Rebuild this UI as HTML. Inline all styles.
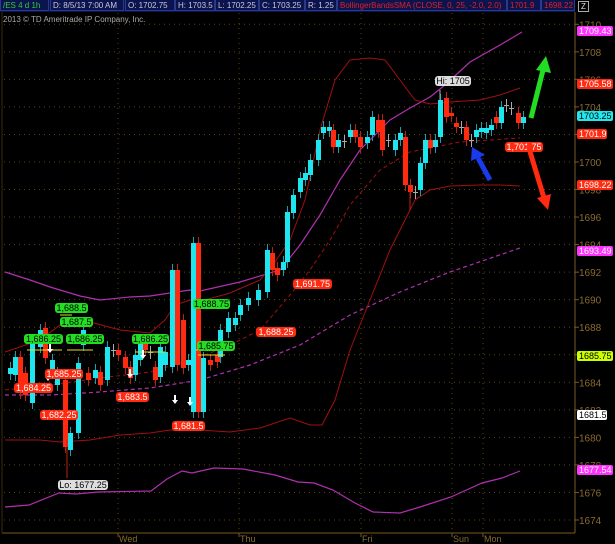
<!DOCTYPE html>
<html><head><meta charset="utf-8"><style>
html,body{margin:0;padding:0;background:#000;width:615px;height:544px;overflow:hidden;font-family:"Liberation Sans",sans-serif}
#hdr{position:absolute;left:0;top:0;height:12px;width:575px;background:#0c1450;}
.c{position:absolute;top:0;height:11px;border:1px solid #2a3a8a;border-top:none;font-size:8px;line-height:11px;color:#c8c8d8;padding-left:2px;box-sizing:border-box;white-space:nowrap;overflow:hidden}
</style></head><body>
<div id="hdr">
<div class="c" style="left:0;width:49px;color:#3c3">/ES 4 d 1h</div>
<div class="c" style="left:50px;width:74px">D: 8/5/13 7:00 AM</div>
<div class="c" style="left:125px;width:50px">O: 1702.75</div>
<div class="c" style="left:175px;width:40px">H: 1703.5</div>
<div class="c" style="left:215px;width:44px">L: 1702.25</div>
<div class="c" style="left:259px;width:46px">C: 1703.25</div>
<div class="c" style="left:305px;width:32px">R: 1.25</div>
<div class="c" style="left:337px;width:170px;color:#e02020">BollingerBandsSMA (CLOSE, 0, 25, -2.0, 2.0)</div>
<div class="c" style="left:507px;width:34px;color:#e02020">1701.9</div>
<div class="c" style="left:541px;width:34px;color:#e02020">1698.22</div>
</div>
<div style="position:absolute;left:578px;top:1px;width:9px;height:9px;border:1px solid #aaa;color:#ddd;font-size:8px;line-height:9px;text-align:center">Z</div>
<div style="position:absolute;left:3px;top:15px;font-size:8px;color:#aaa">2013 © TD Ameritrade IP Company, Inc.</div>
<svg id="s" width="615" height="544" style="position:absolute;left:0;top:0" xmlns="http://www.w3.org/2000/svg" font-family="Liberation Sans, sans-serif"></svg>
<script>
var s=document.getElementById('s'),h='';
function Y(p){return 520-(p-1674)*13.77;}
for(var p=1674;p<=1710;p+=2){var y=Y(p);h+='<line x1="4" x2="575" y1="'+y+'" y2="'+y+'" stroke="#5a4414" stroke-dasharray="1,4"/>';h+='<line x1="575" x2="579" y1="'+y+'" y2="'+y+'" stroke="#7a5a20"/><text x="579" y="'+(y+4)+'" font-size="10" fill="#8a6a30">'+p+'</text>';}
[118,239,361,452,483].forEach(function(x){h+='<line x1="'+x+'" x2="'+x+'" y1="13" y2="533" stroke="#5a4414" stroke-dasharray="1,4"/>';h+='<line x1="'+x+'" x2="'+x+'" y1="533" y2="537" stroke="#7a5a20"/>';});
h+='<line x1="575" x2="575" y1="12" y2="533" stroke="#7a5a20"/><line x1="2" x2="575" y1="533" y2="533" stroke="#7a5a20"/><line x1="2" x2="2" y1="12" y2="533" stroke="#3a2a10"/>';
[['Wed',118],['Thu',239],['Fri',361],['Sun',452],['Mon',483]].forEach(function(a){h+='<text x="'+(a[1]+1)+'" y="542" font-size="9" fill="#8a6a30">'+a[0]+'</text>';});
function pl(pts,c,w,d){h+='<polyline fill="none" stroke="'+c+'" stroke-width="'+w+'" '+(d?'stroke-dasharray="'+d+'"':'')+' points="'+pts+'"/>';}
pl('5,272 30,280 50,287 80,296 100,300 130,297 150,296 170,293 190,290 200,291 240,282 280,270 300,245 320,215 340,180 360,150 390,120 410,108 430,97 445,85 470,62 500,45 522,32','#b030b0',1.2);
pl('5,507 29,505 59,493 76,494 98,492 151,491 167,479 182,471 192,473 214,468 243,469 275,475 298,482 314,483 333,490 355,503 373,512 400,513 420,507 451,497 482,483 502,478 520,471','#b030b0',1.2);
pl('5,395 50,395 100,392 150,388 200,380 250,365 300,345 350,315 400,292 450,272 520,248','#b030b0',1.2,'4,3');
pl('5,352 40,340 60,325 90,322 120,330 150,333 165,320 175,305 190,300 205,300 230,293 260,280 275,262 290,240 305,200 320,130 335,80 350,60 370,58 385,60 400,80 415,100 430,104 450,102 480,100 500,95 520,88','#a01010',1);
pl('5,440 40,440 60,442 90,440 120,435 150,433 170,430 200,430 230,432 260,428 290,418 310,425 322,425 335,400 350,350 370,300 390,250 405,220 415,200 430,190 450,186 480,185 500,185 520,186','#a01010',1);
pl('5,390 50,385 100,378 150,372 200,357 230,345 260,330 290,295 310,270 330,240 350,205 380,170 410,152 440,146 460,142 490,140 520,138','#a01010',1,'4,3');
var C=[[10,368,374,'c'],[15,357,375,'c'],[20,357,393,'r'],[25,373,395,'r'],[32,342,403,'c'],[40,330,347,'c'],[45,328,358,'r'],[52,360,370,'c'],[57,373,385,'c'],[65,380,447,'r'],[70,433,450,'c'],[78,363,433,'c'],[83,330,345,'c'],[88,373,380,'r'],[95,370,378,'c'],[100,372,385,'r'],[107,347,380,'c'],[113,350,351,'g'],[118,350,355,'r'],[125,357,368,'r'],[130,367,378,'r'],[135,355,375,'c'],[140,343,360,'c'],[145,340,350,'r'],[150,352,353,'g'],[155,367,380,'r'],[160,347,377,'c'],[165,352,365,'c'],[172,270,367,'c'],[177,270,365,'r'],[183,320,368,'r'],[188,360,365,'c'],[193,243,412,'c'],[198,243,412,'r'],[203,358,412,'c'],[210,360,365,'r'],[217,355,362,'r'],[220,330,357,'c'],[228,318,332,'c'],[235,318,325,'c'],[240,305,315,'c'],[248,298,305,'c'],[258,290,300,'c'],[267,250,292,'c'],[272,253,270,'r'],[277,268,275,'r'],[283,262,270,'c'],[287,212,262,'c'],[293,195,213,'c'],[300,178,192,'c'],[305,173,180,'c'],[310,160,175,'c'],[318,140,160,'c'],[323,127,133,'c'],[329,127,131,'c'],[333,130,147,'r'],[338,140,147,'c'],[344,141,142,'g'],[350,130,137,'c'],[355,130,137,'r'],[360,137,147,'r'],[367,137,143,'c'],[372,117,135,'c'],[378,120,132,'r'],[382,120,150,'r'],[388,140,141,'g'],[395,140,150,'c'],[400,133,140,'c'],[405,137,185,'r'],[410,185,192,'r'],[415,192,193,'g'],[420,163,190,'c'],[425,140,163,'c'],[430,140,148,'r'],[435,140,147,'c'],[440,100,137,'c'],[446,98,117,'r'],[451,113,116,'r'],[456,123,127,'r'],[461,127,128,'g'],[466,127,140,'r'],[471,140,141,'g'],[476,130,137,'c'],[481,128,132,'c'],[486,128,133,'c'],[491,125,130,'c'],[496,117,123,'r'],[501,107,123,'c'],[506,105,106,'g'],[511,108,109,'g'],[518,113,123,'r'],[523,117,123,'c']];
C.forEach(function(a){var col=a[3]=='c'?'#1ee6ee':a[3]=='r'?'#ff2a10':'#aaa';var wc=a[3]=='c'?'#16a0a8':a[3]=='r'?'#c02010':'#aaa';
h+='<line x1="'+(a[0]+0.5)+'" x2="'+(a[0]+0.5)+'" y1="'+(a[1]-6)+'" y2="'+(a[2]+6)+'" stroke="'+wc+'"/>';
h+='<rect x="'+(a[0]-2)+'" y="'+a[1]+'" width="5" height="'+Math.max(1,a[2]-a[1])+'" fill="'+col+'"/>';});
h+='<line x1="67" x2="67" y1="440" y2="478" stroke="#c02010"/><line x1="410" x2="410" y1="190" y2="210" stroke="#c02010"/><line x1="440" x2="440" y1="90" y2="100" stroke="#aaa"/>';
[[27,62,350],[67,93,350],[135,165,352],[198,225,355],[60,72,315],[196,230,350]].forEach(function(a){h+='<line x1="'+a[0]+'" x2="'+a[1]+'" y1="'+a[2]+'" y2="'+a[2]+'" stroke="#e0e020"/>';});
[[50,352],[130,377],[143,358],[175,403],[190,405],[48,380]].forEach(function(a){h+='<path d="M'+(a[0]-1)+' '+(a[1]-8)+'h2v5h2l-3,4l-3,-4h2z" fill="#fff"/>';});
function lab(x,y,w,t,bg,fg){h+='<rect x="'+x+'" y="'+y+'" width="'+w+'" height="10" rx="3" fill="'+bg+'"/><text x="'+(x+w/2)+'" y="'+(y+8)+'" font-size="9" text-anchor="middle" fill="'+fg+'">'+t+'</text>';}
var G='#22dd22',R='#ff2a10';
lab(55,303,33,'1,688.5',G,'#000');lab(60,317,33,'1,687.5',G,'#000');lab(24,334,39,'1,686.25',G,'#000');lab(66,334,38,'1,686.25',G,'#000');lab(132,334,37,'1,686.25',G,'#000');lab(193,299,37,'1,688.75',G,'#000');lab(197,341,38,'1,685.75',G,'#000');
lab(45,369,38,'1,685.25',R,'#fff');lab(14,383,39,'1,684.25',R,'#fff');lab(40,410,38,'1,682.25',R,'#fff');lab(116,392,33,'1,683.5',R,'#fff');lab(172,421,33,'1,681.5',R,'#fff');lab(256,327,40,'1,688.25',R,'#fff');lab(293,279,39,'1,691.75',R,'#fff');lab(505,142,38,'1,701.75',R,'#fff');
lab(435,76,36,'Hi: 1705','#ddd','#000');lab(58,480,50,'Lo: 1677.25','#ddd','#000');
function rl(y,t,bg,fg,w){h+='<rect x="577" y="'+(y-5)+'" width="'+(w||36)+'" height="10" rx="2" fill="'+bg+'"/><text x="579" y="'+(y+3)+'" font-size="9" fill="'+fg+'">'+t+'</text>';}
rl(31,'1709.43','#ff33ff','#fff');rl(84,'1705.58',R,'#fff');rl(116,'1703.25','#22e8ee','#000');rl(134,'1701.9',R,'#fff',30);rl(185,'1698.22',R,'#fff');rl(251,'1693.49','#ff33ff','#fff');rl(356,'1685.75','#ccff00','#000');rl(415,'1681.5','#fff','#000',30);rl(470,'1677.54','#ff33ff','#fff');
h+='<line x1="531" y1="118" x2="543" y2="70" stroke="#22dd22" stroke-width="5"/><path d="M536,70 L546,56 L551,73 Z" fill="#22dd22"/>';
h+='<line x1="528" y1="145" x2="544" y2="198" stroke="#ff2a10" stroke-width="5"/><path d="M537,198 L548,210 L551,194 Z" fill="#ff2a10"/>';
h+='<line x1="490" y1="180" x2="478" y2="158" stroke="#1a3aee" stroke-width="5"/><path d="M471,161 L472,147 L485,155 Z" fill="#1a3aee"/>';
s.innerHTML=h;
</script>
</body></html>
